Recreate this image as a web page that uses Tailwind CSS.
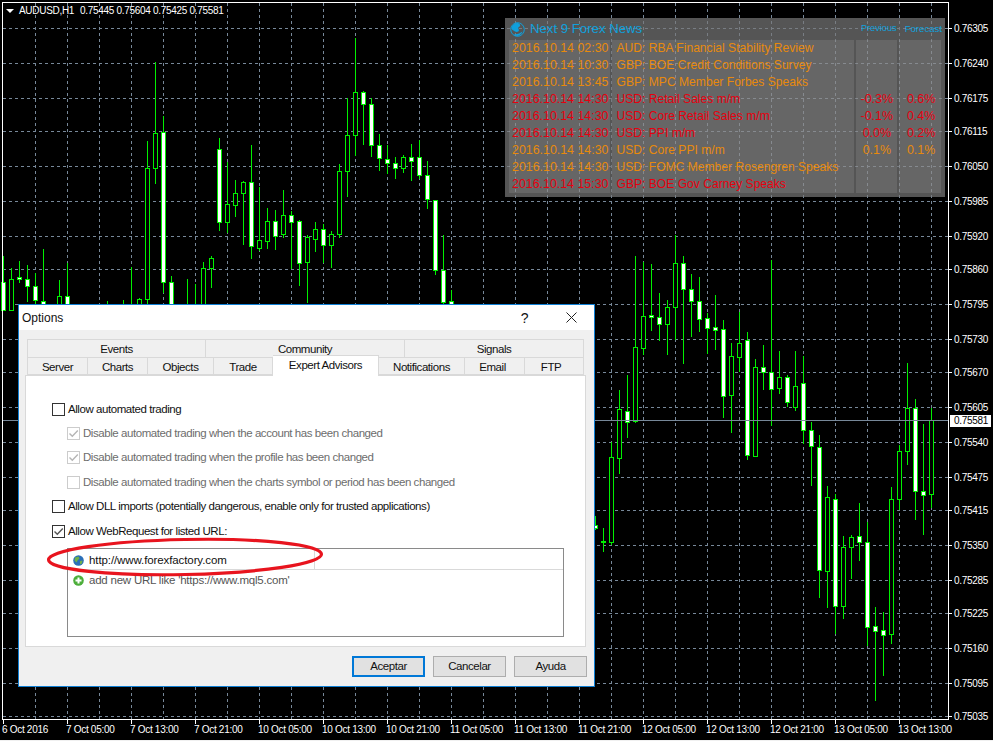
<!DOCTYPE html>
<html lang="en">
<head>
    <meta charset="UTF-8">
    <title>AUDUSD,H1 - Options</title>
    <script src="https://cdn.jsdelivr.net/npm/@tailwindcss/browser@4"></script>
</head>
<body class="bg-black">
<div class="relative w-[993px] h-[741px] overflow-hidden bg-black font-['Liberation_Sans',sans-serif]">

    <!-- chart canvas, filled in by the script below -->
    <svg id="chart" class="absolute inset-0 tracking-[-0.3px]" width="993" height="741" shape-rendering="crispEdges" font-size="10"></svg>
    <div class="absolute left-0 right-0 bottom-0 h-px bg-[#f0f0f0]"></div>

    <!-- news panel -->
    <div class="absolute left-[505px] top-[18px] w-[440px] h-[179px] bg-[#797979]/70 flex flex-col px-[4px] pb-[4px]">
        <div class="h-[22px] flex items-center shrink-0">
            <svg class="ml-[1px]" width="15" height="15" viewBox="0 0 15 15">
                <circle cx="7.5" cy="7.5" r="6.8" fill="none" stroke="#0fa0dc" stroke-width="1"/>
                <path d="M1.5 7 C1.5 3.5 4.5 1 8 1 C10.5 2 11 4 9 5 C7.5 5.5 8.5 7 9 8 C9 10 6.5 10.5 5 9.5 C3.5 8.5 2.5 8 1.5 7 Z" fill="#0fa0dc"/>
                <path d="M4 12 C7 12.5 10 11.5 12.5 9.5 C12 11.5 10 13.5 7.5 14 C6 14 5 13 4 12 Z" fill="#0fa0dc"/>
            </svg>
            <span class="ml-[5px] text-[13.2px] text-[#0fa0dc]">Next 9 Forex News</span>
            <span class="ml-auto text-[9.2px] text-[#0fa0dc]">Previous</span>
            <span class="ml-[8px] -mr-[1px] text-[9.6px] text-[#0fa0dc]">Forecast</span>
        </div>
        <div class="flex-1 flex gap-[2px] text-[12.4px] leading-[17px]">
            <div class="w-[101px] bg-white/10 pl-[3px]" id="newsTime"></div>
            <div class="w-[244px] bg-white/10 pl-[5px] text-[12.1px]" id="newsName"></div>
            <div class="w-[41px] bg-white/10 text-center" id="newsPrev"></div>
            <div class="w-[42px] bg-white/10 text-center pl-[2px]" id="newsFore"></div>
        </div>
    </div>

    <!-- options dialog -->
    <div class="absolute left-[18px] top-[304px] w-[577px] h-[383px] border border-[#0f7fd4] bg-[#f0f0f0] flex flex-col text-[11.5px] tracking-[-0.44px] text-[#111]">
        <div class="h-[25px] bg-white flex items-center shrink-0 pl-[3px]">
            <span class="text-[12px] tracking-normal">Options</span>
            <span class="ml-auto mr-[38px] text-[14px] leading-none">?</span>
            <svg class="mr-[17px]" width="11" height="11" viewBox="0 0 11 11"><path d="M0.5 0.5 L10.5 10.5 M10.5 0.5 L0.5 10.5" stroke="#222" stroke-width="1" fill="none"/></svg>
        </div>

        <div class="pl-[8px] pt-[9px] shrink-0">
            <div class="flex h-[18px] text-center leading-[18px]">
                <div class="w-[179px] border border-b-0 border-[#d9d9d9]">Events</div>
                <div class="w-[199px] border border-b-0 border-l-0 border-[#d9d9d9]">Community</div>
                <div class="w-[179px] border border-b-0 border-l-0 border-[#d9d9d9]">Signals</div>
            </div>
            <div class="flex h-[18px] text-center leading-[18px] items-start">
                <div class="w-[61px] h-[18px] border border-[#d9d9d9]">Server</div>
                <div class="w-[60px] h-[18px] border border-l-0 border-[#d9d9d9]">Charts</div>
                <div class="w-[66px] h-[18px] border border-l-0 border-[#d9d9d9]">Objects</div>
                <div class="w-[59px] h-[18px] border border-l-0 border-[#d9d9d9]">Trade</div>
                <div class="relative z-10 w-[106px] h-[21px] -mt-[2px] bg-white border border-b-0 border-l-0 border-[#d9d9d9]">Expert Advisors</div>
                <div class="w-[86px] h-[18px] border border-l-0 border-[#d9d9d9]">Notifications</div>
                <div class="w-[60px] h-[18px] border border-l-0 border-[#d9d9d9] pr-[4px]">Email</div>
                <div class="w-[59px] h-[18px] border border-l-0 border-[#d9d9d9] pr-[6px]">FTP</div>
            </div>
        </div>

        <div class="ml-[6px] w-[561px] h-[272px] bg-white border border-[#d9d9d9] pl-[26px] pt-[21px] shrink-0">
            <label class="flex items-center h-[24.4px]">
                <span class="w-[13px] h-[13px] border border-[#333] bg-white shrink-0"></span>
                <span class="ml-[3px]">Allow automated trading</span>
            </label>
            <label class="flex items-center h-[24.4px] pl-[15px] text-[#6d6d6d]">
                <span class="w-[13px] h-[13px] border border-[#ccc] bg-white shrink-0 flex items-center justify-center">
                    <svg width="11" height="11" viewBox="0 0 11 11"><path d="M1.5 5.5 L4.3 8.3 L9.8 2.5" fill="none" stroke="#b5b5b5" stroke-width="1.4"/></svg>
                </span>
                <span class="ml-[3px]">Disable automated trading when the account has been changed</span>
            </label>
            <label class="flex items-center h-[24.4px] pl-[15px] text-[#6d6d6d]">
                <span class="w-[13px] h-[13px] border border-[#ccc] bg-white shrink-0 flex items-center justify-center">
                    <svg width="11" height="11" viewBox="0 0 11 11"><path d="M1.5 5.5 L4.3 8.3 L9.8 2.5" fill="none" stroke="#b5b5b5" stroke-width="1.4"/></svg>
                </span>
                <span class="ml-[3px]">Disable automated trading when the profile has been changed</span>
            </label>
            <label class="flex items-center h-[24.4px] pl-[15px] text-[#6d6d6d]">
                <span class="w-[13px] h-[13px] border border-[#ccc] bg-white shrink-0"></span>
                <span class="ml-[3px]">Disable automated trading when the charts symbol or period has been changed</span>
            </label>
            <label class="flex items-center h-[24.4px]">
                <span class="w-[13px] h-[13px] border border-[#333] bg-white shrink-0"></span>
                <span class="ml-[3px]">Allow DLL imports (potentially dangerous, enable only for trusted applications)</span>
            </label>
            <label class="flex items-center h-[24.4px]">
                <span class="w-[13px] h-[13px] border border-[#333] bg-white shrink-0 flex items-center justify-center">
                    <svg width="11" height="11" viewBox="0 0 11 11"><path d="M1.5 5.5 L4.3 8.3 L9.8 2.5" fill="none" stroke="#555" stroke-width="1.4"/></svg>
                </span>
                <span class="ml-[3px]">Allow WebRequest for listed URL:</span>
            </label>

            <div class="mt-[5px] ml-[15px] w-[497px] h-[89px] border border-[#8a8a8a] bg-white">
                <div class="flex items-center h-[21px] border-b border-[#d9d9d9]">
                    <div class="w-[247px] h-full border-r border-[#d9d9d9] flex items-center pl-[5px] pt-[2px] shrink-0">
                        <svg width="11" height="11" viewBox="0 0 11 11">
                            <circle cx="5.5" cy="5.5" r="5.3" fill="#2b6fb8"/>
                            <path d="M2 2.5 L5.5 1.5 L6.5 3.5 L4.5 5.5 L3.5 7.5 L1.5 5.5 Z M7 6 L9.5 5.5 L9 8.5 L7 9.5 Z" fill="#6fb04a"/>
                        </svg>
                        <span class="ml-[5px] whitespace-nowrap tracking-[-0.1px]">http://www.forexfactory.com</span>
                    </div>
                </div>
                <div class="flex items-center h-[20px] pl-[5px] text-[#555]">
                    <svg width="11" height="11" viewBox="0 0 11 11">
                        <circle cx="5.5" cy="5.5" r="5.3" fill="#4cae3a"/>
                        <path d="M5.5 2.5 V8.5 M2.5 5.5 H8.5" stroke="#fff" stroke-width="2"/>
                    </svg>
                    <span class="ml-[5px] tracking-[-0.22px]">add new URL like 'https://www.mql5.com'</span>
                </div>
            </div>
        </div>

        <div class="flex justify-end gap-[8px] pr-[7px] pt-[9px]">
            <button class="w-[73px] h-[21px] bg-[#e1e1e1] border-2 border-[#0078d7] leading-none">Aceptar</button>
            <button class="w-[73px] h-[21px] bg-[#e1e1e1] border border-[#adadad] leading-none">Cancelar</button>
            <button class="w-[73px] h-[21px] bg-[#e1e1e1] border border-[#adadad] leading-none">Ayuda</button>
        </div>

        <!-- red ellipse drawn over the url list -->
        <svg class="absolute left-[26px] top-[230px]" width="282" height="44" viewBox="0 0 282 44">
            <ellipse cx="140" cy="22" rx="136.5" ry="17.5" transform="rotate(-1.2 140 22)" fill="none" stroke="#e8141e" stroke-width="3.2"/>
        </svg>
    </div>
</div>

<script>
    const NS = "http://www.w3.org/2000/svg";
    const chart = document.getElementById("chart");
    const GRID = "#778899";
    const GREEN = "#00f000";

    function add(tag, attrs, text) {
        const el = document.createElementNS(NS, tag);
        for (const k in attrs) el.setAttribute(k, attrs[k]);
        if (text) el.textContent = text;
        chart.appendChild(el);
        return el;
    }

    const prices = [
        ["0.76305", 28], ["0.76240", 63], ["0.76175", 98], ["0.76115", 131], ["0.76050", 166],
        ["0.75985", 201], ["0.75920", 236], ["0.75860", 269], ["0.75795", 304], ["0.75730", 339],
        ["0.75670", 372], ["0.75605", 407], ["0.75540", 442], ["0.75475", 477], ["0.75415", 510],
        ["0.75350", 545], ["0.75285", 580], ["0.75225", 613], ["0.75160", 648], ["0.75095", 683],
        ["0.75035", 716]
    ];

    // grid
    for (let x = 35; x < 948; x += 32) {
        add("line", { x1: x + .5, y1: 3, x2: x + .5, y2: 719, stroke: GRID, "stroke-dasharray": "3 3" });
    }
    prices.forEach(([label, y]) => {
        add("line", { x1: 3, y1: y + .5, x2: 948, y2: y + .5, stroke: GRID, "stroke-dasharray": "3 3" });
        add("line", { x1: 948, y1: y + .5, x2: 952, y2: y + .5, stroke: "#fff" });
        add("text", { x: 954, y: y + 4, fill: "#fff", "shape-rendering": "auto" }, label);
    });

    // x, wick top, wick bottom, body top, body bottom, 1 = white body
    const candles = [
        [3,256,300,282,310,1],[11,268,310,279,310,0],[19,261,283,277,279,1],[27,265,302,279,286,1],
        [35,273,310,286,300,1],[43,249,310,301,310,1],[59,280,310,296,310,0],[67,263,310,296,310,1],
        [107,301,310,0,0,0],[123,300,310,0,0,0],[131,267,310,0,0,0],[139,298,310,299,310,0],
        [147,141,305,168,299,0],[155,62,184,133,168,0],[163,116,293,132,282,1],[171,276,310,282,310,1],
        [187,279,310,0,0,0],[195,284,310,0,0,0],[203,262,310,268,310,0],[211,256,288,258,268,0],
        [219,138,231,149,222,1],[227,162,233,204,222,0],[235,180,217,193,205,0],[243,181,245,182,193,0],
        [251,145,259,182,246,1],[259,187,251,240,248,0],[267,208,249,221,241,0],[275,210,250,221,236,1],
        [283,190,238,215,234,0],[291,211,269,215,222,1],[299,220,286,221,263,1],[307,235,303,237,262,0],
        [315,222,252,229,239,0],[323,224,263,229,245,1],[331,231,268,234,245,0],[339,164,238,171,234,0],
        [347,98,197,135,171,0],[355,38,156,92,135,0],[363,91,145,92,104,1],[371,98,157,104,145,1],
        [379,134,171,145,158,1],[387,145,174,159,163,1],[395,157,179,163,168,1],[403,155,173,157,168,0],
        [411,144,181,157,161,1],[419,140,179,157,175,1],[427,161,209,175,199,1],[435,200,275,200,270,1],
        [443,235,310,270,302,1],[451,290,310,301,310,1],
        [595,516,530,525,528,1],[603,528,552,541,542,1],[611,442,545,457,542,0],[619,390,474,409,458,0],
        [627,375,438,411,422,1],[635,256,423,347,421,0],[643,262,355,316,348,0],[651,264,331,315,317,1],
        [659,293,341,317,324,1],[667,300,355,307,324,0],[675,235,340,263,307,0],[683,256,364,263,289,1],
        [691,274,337,289,301,1],[699,277,332,301,319,1],[707,313,354,318,328,1],[715,295,350,327,330,1],
        [723,320,418,329,396,1],[731,343,433,356,395,0],[739,312,372,343,357,0],[747,332,460,340,455,1],
        [755,359,457,367,456,0],[763,345,390,367,372,1],[771,260,426,372,389,1],[779,351,394,377,388,0],
        [787,375,407,377,402,1],[795,351,411,386,407,0],[803,356,444,383,430,1],[811,422,486,430,446,1],
        [819,435,598,447,570,1],[827,486,608,497,571,0],[835,494,634,499,606,1],[843,536,619,547,606,0],
        [851,535,579,537,547,0],[859,503,561,536,542,1],[867,522,646,542,627,1],[875,607,701,626,631,1],
        [883,612,676,630,635,1],[891,487,644,499,634,0],[899,445,510,451,499,0],[907,363,465,408,451,0],
        [915,399,520,408,491,1],[923,424,535,491,495,1],[931,408,508,420,494,0]
    ];
    candles.forEach(([x, wickTop, wickBottom, top, bottom, white]) => {
        add("line", { x1: x + .5, y1: wickTop, x2: x + .5, y2: wickBottom, stroke: GREEN });
        if (top) {
            add("rect", { x: x - 1.5, y: top + .5, width: 4, height: bottom - top, fill: white ? "#fff" : "#000", stroke: GREEN });
        }
    });

    // bid line
    add("line", { x1: 3, y1: 420.5, x2: 948, y2: 420.5, stroke: GRID });

    // frame
    add("rect", { x: 2.5, y: 2.5, width: 946, height: 717, fill: "none", stroke: "#fff" });

    // bid label
    add("rect", { x: 950, y: 415, width: 41, height: 12, fill: "#fff" });
    add("text", { x: 954, y: 424, fill: "#000", "shape-rendering": "auto" }, "0.75581");

    // time axis
    const times = ["6 Oct 2016", "7 Oct 05:00", "7 Oct 13:00", "7 Oct 21:00", "10 Oct 05:00", "10 Oct 13:00",
        "10 Oct 21:00", "11 Oct 05:00", "11 Oct 13:00", "11 Oct 21:00", "12 Oct 05:00", "12 Oct 13:00",
        "12 Oct 21:00", "13 Oct 05:00", "13 Oct 13:00"];
    times.forEach((label, i) => {
        const x = 3 + i * 64;
        add("line", { x1: x + .5, y1: 719, x2: x + .5, y2: 724, stroke: "#fff" });
        add("text", { x: x - 1, y: 733, fill: "#fff", "shape-rendering": "auto" }, label);
    });

    // chart header
    add("path", { d: "M6 9 H14 L10 13 Z", fill: "#fff", "shape-rendering": "auto" });
    add("text", { x: 19, y: 14, fill: "#fff", "shape-rendering": "auto" }, "AUDUSD,H1");
    add("text", { x: 80, y: 14, fill: "#fff", "shape-rendering": "auto" }, "0.75445 0.75604 0.75425 0.75581");

    // news rows
    const news = [
        ["2016.10.14 02:30", "AUD: RBA Financial Stability Review", "", "", 0],
        ["2016.10.14 10:30", "GBP: BOE Credit Conditions Survey", "", "", 0],
        ["2016.10.14 13:45", "GBP: MPC Member Forbes Speaks", "", "", 0],
        ["2016.10.14 14:30", "USD: Retail Sales m/m", "-0.3%", "0.6%", 1],
        ["2016.10.14 14:30", "USD: Core Retail Sales m/m", "-0.1%", "0.4%", 1],
        ["2016.10.14 14:30", "USD: PPI m/m", "0.0%", "0.2%", 1],
        ["2016.10.14 14:30", "USD: Core PPI m/m", "0.1%", "0.1%", 0],
        ["2016.10.14 14:30", "USD: FOMC Member Rosengren Speaks", "", "", 0],
        ["2016.10.14 15:30", "GBP: BOE Gov Carney Speaks", "", "", 1]
    ];
    ["newsTime", "newsName", "newsPrev", "newsFore"].forEach((id, col) => {
        const holder = document.getElementById(id);
        news.forEach(row => {
            const cell = document.createElement("div");
            cell.className = row[4] ? "h-[17px] whitespace-nowrap text-[#e6000f]" : "h-[17px] whitespace-nowrap text-[#e88a0c]";
            cell.textContent = row[col];
            holder.appendChild(cell);
        });
    });
</script>
</body>
</html>
